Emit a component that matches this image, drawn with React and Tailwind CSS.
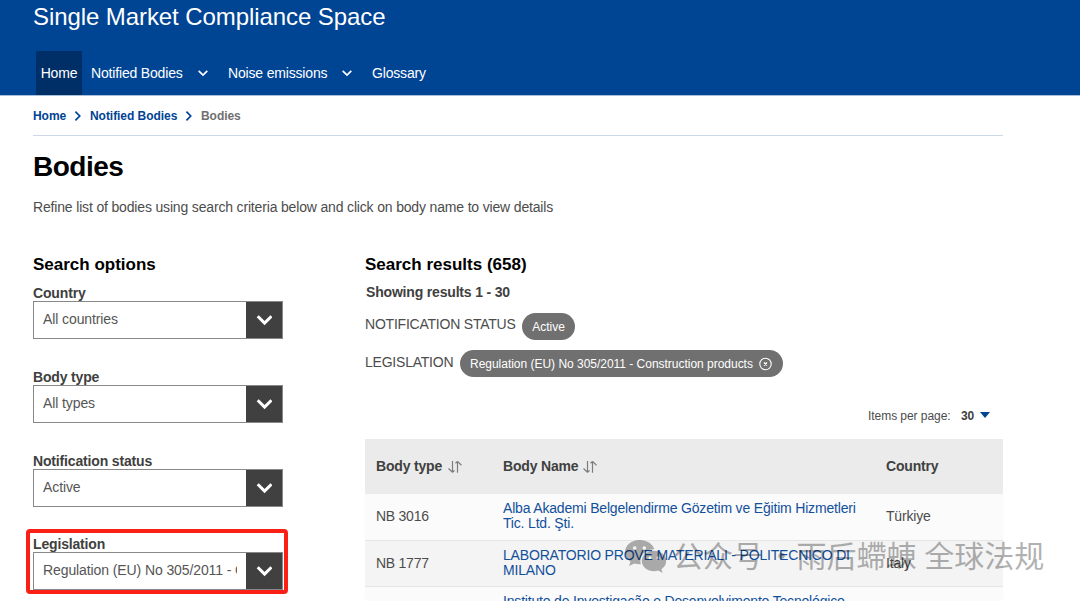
import React from 'react';

const filters = [
    { label: 'Country', value: 'All countries' },
    { label: 'Body type', value: 'All types' },
    { label: 'Notification status', value: 'Active' },
    { label: 'Legislation', value: 'Regulation (EU) No 305/2011 - C' },
];

const bodies = [
    { type: 'NB 3016', name: ['Alba Akademi Belgelendirme Gözetim ve Eğitim Hizmetleri', 'Tic. Ltd. Şti.'], country: 'Türkiye' },
    { type: 'NB 1777', name: ['LABORATORIO PROVE MATERIALI - POLITECNICO DI', 'MILANO'], country: 'Italy' },
    { type: '', name: ['Instituto de Investigação e Desenvolvimento Tecnológico', '\u00a0'], country: '' },
];

const Chevron = ({ className, d = 'M2 4.5l5 5 5-5', width = 2 }) => (
    <svg className={className} viewBox="0 0 14 14" fill="none" stroke="currentColor" strokeWidth={width}>
        <path d={d} />
    </svg>
);

const SortIcon = () => (
    <svg className="w-4 h-3.5 text-[#7d7d7d]" viewBox="0 0 16 14" fill="none" stroke="currentColor" strokeWidth="1.2">
        <path d="M5.500 1v11.200M1.500 8.500l4 3.800M5.500 12.300l2-1.800M10.500 12.800V1.500M8.500 3.300l2-1.900M10.500 1.400l4 3.900" />
    </svg>
);

const Header = () => (
    <header className="h-24 border-b border-[#a9c0dc] bg-[#004494] text-white pl-[33px]">
        <div className="h-[51px] pt-[1px] text-[24px] leading-[32px] tracking-[-0.08px] whitespace-nowrap">Single Market Compliance Space</div>
        <nav className="flex h-11 items-center text-[14px] tracking-[-0.17px] pl-[3px] whitespace-nowrap">
            <a className="flex h-11 w-[46px] items-center justify-center bg-[#002f67]">Home</a>
            <a className="ml-[9px] w-[106px]">Notified Bodies</a>
            <Chevron className="w-3 h-3" />
            <a className="ml-[19px] w-[113px]">Noise emissions</a>
            <Chevron className="w-3 h-3" />
            <a className="ml-[19px]">Glossary</a>
        </nav>
    </header>
);

const Filter = ({ label, value }) => (
    <div className="h-[83.8px]">
        <div className="h-[17px] text-[14px] leading-[19px] font-bold tracking-[-0.16px]">{label}</div>
        <div className="flex h-[38px] w-[250px] border border-[#888] bg-white">
            <div className="w-[203px] ml-[9px] overflow-hidden whitespace-nowrap text-[14px] leading-[35.500px] tracking-[-0.1px] text-[#555]">
                <div className="w-[194px] overflow-hidden">{value}</div>
            </div>
            <div className="flex flex-1 items-center justify-center bg-[#404040] text-white">
                <Chevron className="w-4 h-4" width={2.6} d="M1.500 3.700l6 6 6-6" />
            </div>
        </div>
    </div>
);

const Results = () => (
    <section className="w-[638px]">
        <h2 className="text-[17px] leading-6 font-bold text-black">Search results (658)</h2>
        <div className="mt-[4px] pl-px text-[14px] leading-[22px] font-bold tracking-[-0.18px]">Showing results 1 - 30</div>
        <div className="mt-2 flex h-[30px] whitespace-nowrap text-[14px]">
            <span className="w-[157px] leading-[26px] tracking-[-0.22px] text-[#4c4c4c]">NOTIFICATION STATUS</span>
            <span className="mt-[2px] flex h-[27px] w-[53px] items-center justify-center rounded-full bg-[#707070] pt-px text-[12px] text-white">Active</span>
        </div>
        <div className="mt-2 flex h-[30px] whitespace-nowrap text-[14px]">
            <span className="w-[95px] leading-[26px] tracking-[-0.22px] text-[#4c4c4c]">LEGISLATION</span>
            <span className="mt-[1px] flex h-[27px] w-[323px] items-center rounded-full bg-[#707070] pl-[10px] text-[12px] tracking-[-0.02px] text-white">
                <span className="w-[288px] pt-px">Regulation (EU) No 305/2011 - Construction products</span>
                <svg className="w-3.5 h-3.5" viewBox="0 0 14 14" fill="none" stroke="currentColor" strokeWidth="1.1">
                    <circle cx="7.500" cy="7" r="5.700" />
                    <path d="M6 5.500l3 3M9 5.500l-3 3" strokeWidth="1.400" />
                </svg>
            </span>
        </div>
        <div className="mt-[26px] flex h-[22px] items-center whitespace-nowrap pl-[503px] text-[12px] tracking-[-0.05px]">
            <span className="w-[93px] text-[#4c4c4c]">Items per page:</span>
            <b className="w-[19px]">30</b>
            <svg className="-mt-0.5 w-2.5 h-1.5 text-[#004494]" viewBox="0 0 10 6" fill="currentColor">
                <path d="M0 0h10L5 6z" />
            </svg>
        </div>
        <table className="mt-[12px] w-[638px] table-fixed text-left text-[14px] tracking-[-0.18px]">
            <thead>
                <tr className="h-[55px] bg-[#ebebeb]">
                    <th className="w-[127px] pl-[11px]"><div className="flex items-center gap-[5px]">Body type <SortIcon /></div></th>
                    <th className="w-[383px] pl-[11px]"><div className="flex items-center gap-[4px]">Body Name <SortIcon /></div></th>
                    <th className="pl-[11px]">Country</th>
                </tr>
            </thead>
            <tbody className="text-[#4c4c4c]">
                {bodies.map((body) => (
                    <tr key={body.name[0]} className="h-[46px] border-b border-[#e6e6e6] odd:bg-[#fbfbfb] even:bg-[#f4f4f4]">
                        <td className="pl-[11px] tracking-[-0.25px]">{body.type}</td>
                        <td className="pl-[11px] pb-px leading-[15px] text-[#12509b] whitespace-nowrap">
                            {body.name.map((line) => <div key={line}>{line}</div>)}
                        </td>
                        <td className="pl-[11px]">{body.country}</td>
                    </tr>
                ))}
            </tbody>
        </table>
    </section>
);

const Watermark = () => (
    <div className="absolute left-[625px] top-[534px] flex text-black opacity-30">
        <svg className="mt-[3px] w-[42px] h-[38px]" viewBox="0 0 42 38" fill="currentColor" fillRule="evenodd">
            <path d="M14.5 3C6.5 3 0 8.4 0 15.200c0 3.900 2.100 7.200 5.500 9.500L4 29l5.300-2.600c1.800.5 3.600.8 5.500.8h1c-2.200-8.200 4.200-15 13.500-15C27.700 6.900 21.800 3 14.500 3zM9.700 9.200a1.800 1.800 0 110 3.600 1.800 1.800 0 010-3.600zm9.600 0a1.800 1.800 0 110 3.600 1.800 1.800 0 010-3.600z" />
            <path d="M29 13.800c-6.800 0-12.200 4.500-12.200 10.200S22.200 34.200 29 34.200c1.500 0 2.900-.2 4.200-.6l4.500 2.400-1.300-3.800c2.900-1.900 4.800-4.800 4.800-8.200 0-5.700-5.400-10.200-12.200-10.200zM25 19.200a1.500 1.500 0 110 3 1.500 1.500 0 010-3zm8 0a1.500 1.500 0 110 3 1.500 1.500 0 010-3z" />
        </svg>
        <span className="ml-[6px] whitespace-pre font-['Noto_Sans_CJK_SC',sans-serif] text-[30px] leading-[40px]">公众号<span className="tracking-[-3.3px]"> · </span>雨后螮蝀<span className="tracking-[1px]"> </span>全球法规</span>
    </div>
);

const App = () => {
    return (
        <div className="relative h-[601px] overflow-hidden bg-white text-[#404040] font-['Liberation_Sans',Arial,sans-serif]">
            <Header />
            <div className="ml-[33px] w-[970px]">
                <div className="flex h-10 items-center border-b border-[#cbd8e8] text-[12px] font-bold tracking-[-0.05px] whitespace-nowrap text-[#004494]">
                    <a className="w-[39px]">Home</a>
                    <Chevron className="w-3 h-3" d="M4 2l5 5-5 5" />
                    <a className="ml-[6px] w-[93px]">Notified Bodies</a>
                    <Chevron className="w-3 h-3" d="M4 2l5 5-5 5" />
                    <span className="ml-[6px] text-[#707070]">Bodies</span>
                </div>
                <h1 className="mt-[13px] text-[28px] leading-9 font-bold tracking-[-0.5px] text-black">Bodies</h1>
                <p className="mt-[12px] text-[14px] leading-[20px] tracking-[-0.165px] text-[#4c4c4c]">
                    Refine list of bodies using search criteria below and click on body name to view details
                </p>
                <div className="mt-[36px] flex">
                    <aside className="w-[332px]">
                        <h2 className="mb-[7px] text-[17px] leading-6 font-bold text-black">Search options</h2>
                        {filters.map((filter) => <Filter key={filter.label} {...filter} />)}
                    </aside>
                    <Results />
                </div>
            </div>
            {/* Highlight around the legislation filter */}
            <div className="absolute left-[26px] top-[529px] h-[65px] w-[262px] rounded-[4px] border-4 border-[#fb2015]"></div>
            <Watermark />
        </div>
    );
};

export default App;
